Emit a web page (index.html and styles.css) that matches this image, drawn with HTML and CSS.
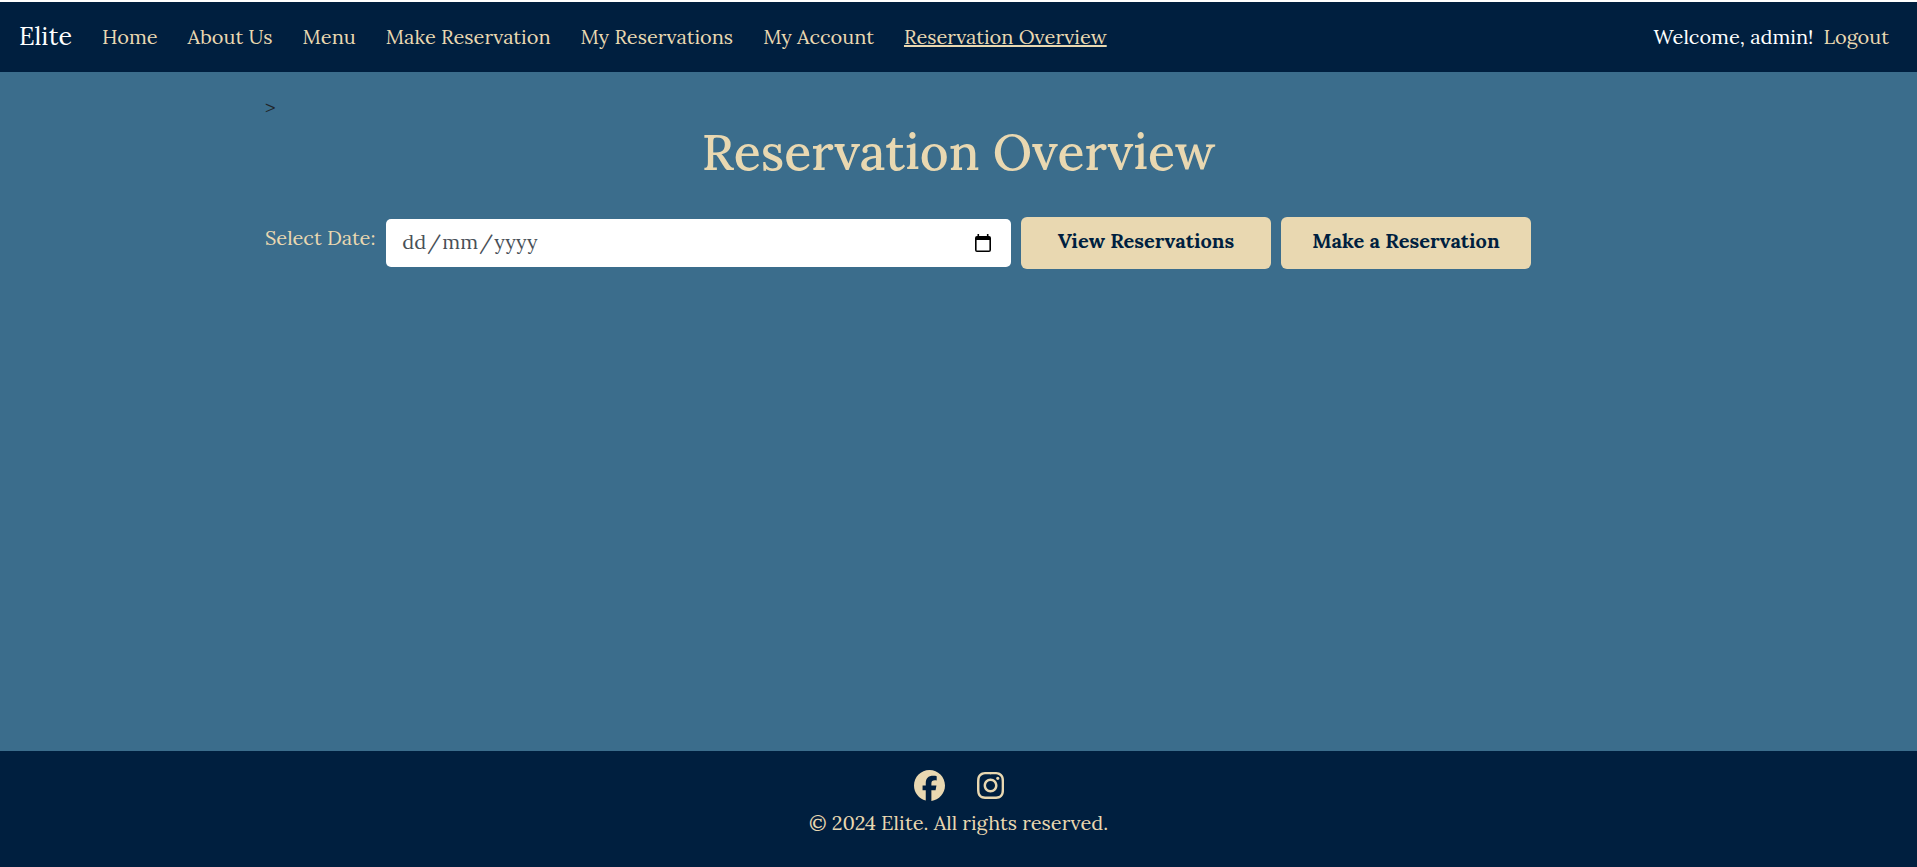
FILE: index.html
```
<!DOCTYPE html>
<html lang="en">
<head>
<meta charset="utf-8">
<title>Reservation Overview</title>
<link rel="stylesheet" href="styles.css">
</head>
<body>
<header class="navbar">
  <nav class="nav">
    <a class="brand">Elite</a>
    <a>Home</a>
    <a>About Us</a>
    <a>Menu</a>
    <a>Make Reservation</a>
    <a>My Reservations</a>
    <a>My Account</a>
    <a class="active">Reservation Overview</a>
  </nav>
  <div class="user">
    <span class="welcome">Welcome, admin!</span>
    <a>Logout</a>
  </div>
</header>
<main class="container">
  <div class="stray">&gt;</div>
  <h1 class="title">Reservation Overview</h1>
  <form class="form">
    <label class="label">Select Date:</label>
    <div class="date">
      <span class="date-text"><span class="field">dd</span>/<span class="field">mm</span>/<span class="field">yyyy</span></span>
      <svg class="calendar" width="16" height="18" viewBox="0 0 16 18"><path d="M2 2h12a2 2 0 0 1 2 2v12a2 2 0 0 1-2 2H2a2 2 0 0 1-2-2V4a2 2 0 0 1 2-2zm-.4 4v10.400h12.800V6z" fill-rule="evenodd"/><path d="M2.500 0h1.600v3H2.500zM11.900 0h1.600v3h-1.600z"/></svg>
    </div>
    <button type="button" class="btn">View Reservations</button>
    <button type="button" class="btn">Make a Reservation</button>
  </form>
</main>
<footer class="footer">
  <div class="social">
    <svg width="31" height="31" viewBox="0 0 512 512"><path d="M512 256C512 114.600 397.400 0 256 0S0 114.600 0 256c0 120 82.700 220.800 194.200 248.500V334.200h-52.800V256h52.800v-33.700c0-87.100 39.400-127.500 125-127.500 16.200 0 44.200 3.200 55.700 6.400V172c-6-.6-16.500-1-29.600-1-42 0-58.200 15.900-58.200 57.200V256h83.600l-14.400 78.200h-69.300v175.900C413.800 494.800 512 386.900 512 256z"/></svg>
    <svg width="27.100" height="31" viewBox="0 0 448 512"><path d="M224.100 141c-63.600 0-114.900 51.300-114.900 114.900s51.300 114.900 114.900 114.900S339 319.500 339 255.900 287.700 141 224.100 141zm0 189.600c-41.100 0-74.700-33.500-74.700-74.700s33.500-74.700 74.700-74.700 74.700 33.500 74.700 74.700-33.600 74.700-74.700 74.700zm146.400-194.300c0 14.900-12 26.800-26.800 26.800-14.900 0-26.800-12-26.800-26.800s12-26.800 26.800-26.800 26.800 12 26.800 26.800zm76.100 27.200c-1.700-35.900-9.900-67.700-36.200-93.900-26.200-26.200-58-34.400-93.900-36.200-37-2.100-147.900-2.100-184.900 0-35.800 1.700-67.600 9.900-93.900 36.100s-34.400 58-36.200 93.900c-2.100 37-2.100 147.900 0 184.900 1.700 35.900 9.900 67.700 36.200 93.900s58 34.400 93.900 36.200c37 2.100 147.900 2.100 184.900 0 35.900-1.700 67.700-9.900 93.900-36.200 26.200-26.200 34.400-58 36.200-93.900 2.100-37 2.100-147.800 0-184.800zM398.800 388c-7.800 19.600-22.900 34.700-42.600 42.600-29.500 11.700-99.500 9-132.100 9s-102.700 2.600-132.100-9c-19.600-7.800-34.700-22.900-42.600-42.600-11.700-29.500-9-99.500-9-132.100s-2.600-102.700 9-132.100c7.800-19.600 22.900-34.700 42.600-42.600 29.500-11.700 99.500-9 132.100-9s102.700-2.600 132.100 9c19.600 7.800 34.700 22.900 42.600 42.600 11.700 29.500 9 99.500 9 132.100s2.700 102.700-9 132.100z"/></svg>
  </div>
  <p class="copyright">© 2024 Elite. All rights reserved.</p>
</footer>
</body>
</html>
```
FILE: styles.css
```
* { box-sizing: border-box; }
body {
  margin: 0;
  height: 867px;
  padding-top: 2px;
  display: flex;
  flex-direction: column;
  overflow: hidden;
  background: #fff;
  color: #e9d8b1;
  font: 20px/30px Lora, "Liberation Serif", serif;
  white-space: nowrap;
}
.navbar {
  height: 70px;
  flex: none;
  display: flex;
  align-items: center;
  justify-content: space-between;
  padding: 0 28px 0 19px;
  background: #001f3f;
}
.nav {
  display: flex;
  align-items: center;
  gap: 30px;
}
.brand { color: #fff; font-size: 25px; padding-bottom: 2px; }
.active { text-decoration: underline; text-decoration-thickness: 2px; text-underline-offset: 1px; }
.user { display: flex; gap: 10px; }
.welcome { color: #fff; }
.container {
  flex: 1;
  padding: 0 265px;
  background: #3b6d8c;
}
.stray {
  height: 47px;
  padding-top: 20px;
  color: #212529;
  font: 20px/30px Lora, serif;
}
.title {
  margin: 0;
  height: 70px;
  font-size: 50px;
  font-weight: 500;
  line-height: 66px;
  text-align: center;
}
.form {
  margin-top: 28px;
  display: grid;
  grid-template-columns: 111px 625px 250px 250px;
  column-gap: 10px;
  align-items: center;
}
.label { padding-bottom: 11px; }
.date {
  height: 48px;
  display: flex;
  align-items: center;
  justify-content: space-between;
  padding: 0 20px 0 15px;
  border-radius: 5px;
  background: #fff;
  color: #495057;
}
.date-text { padding-bottom: 2px; }
.field { padding: 0 1.2px; }
.calendar { fill: #000; margin-bottom: 1px; }
.btn {
  height: 52px;
  padding: 0 0 5px;
  border: 0;
  border-radius: 6px;
  background: #e9d8b1;
  color: #001f3f;
  font: 700 20px/30px Lora, "Liberation Serif", serif;
}
.footer {
  height: 116px;
  flex: none;
  padding-top: 19px;
  background: #001f3f;
  text-align: center;
}
.social {
  height: 31px;
  display: flex;
  justify-content: center;
  gap: 32px;
  padding-left: 1px;
  fill: #e9d8b1;
}
.copyright { margin: 7px 0 0; }
```
